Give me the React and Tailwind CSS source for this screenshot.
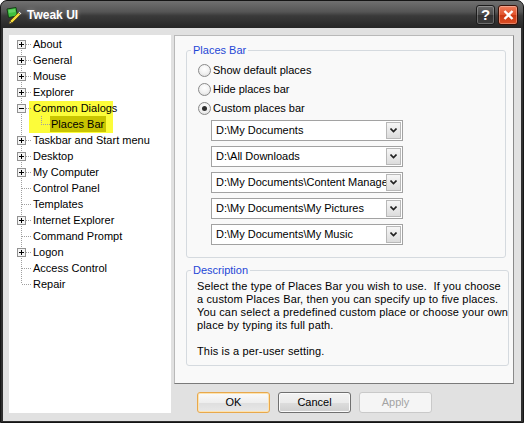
import React from 'react';

const TREE = [
  { label: 'About', box: '+' },
  { label: 'General', box: '+' },
  { label: 'Mouse', box: '+' },
  { label: 'Explorer', box: '+' },
  { label: 'Common Dialogs', box: '-' },
  { label: 'Places Bar', child: true },
  { label: 'Taskbar and Start menu', box: '+' },
  { label: 'Desktop', box: '+' },
  { label: 'My Computer', box: '+' },
  { label: 'Control Panel' },
  { label: 'Templates' },
  { label: 'Internet Explorer', box: '+' },
  { label: 'Command Prompt' },
  { label: 'Logon', box: '+' },
  { label: 'Access Control' },
  { label: 'Repair' }
];

const PLACES = [
  'D:\\My Documents',
  'D:\\All Downloads',
  'D:\\My Documents\\Content Manager',
  'D:\\My Documents\\My Pictures',
  'D:\\My Documents\\My Music'
];

const DOTS = '#a0a0a0';

function Connector({ box, first, last }) {
  return (
    <svg width="16" height="16" className="block shrink-0">
      <line x1="4.5" y1={first ? 8 : 0} x2="4.5" y2={last ? 8 : 16} stroke={DOTS} strokeDasharray="1 1" />
      <line x1={box ? 9 : 5} y1="8.5" x2="15" y2="8.5" stroke={DOTS} strokeDasharray="1 1" />
      {box &&
      <g>
          <rect x="0.5" y="4.5" width="8" height="8" fill="#f4f4f4" stroke="#919191" />
          <line x1="2" y1="8.5" x2="7" y2="8.5" stroke="#000" />
          {box === '+' && <line x1="4.5" y1="6" x2="4.5" y2="11" stroke="#000" />}
        </g>
      }
    </svg>);

}

function ChildConnector() {
  return (
    <>
      <svg width="16" height="16" className="block shrink-0">
        <line x1="4.5" y1="0" x2="4.5" y2="16" stroke={DOTS} strokeDasharray="1 1" />
      </svg>
      <svg width="17" height="16" className="block shrink-0">
        <line x1="8.5" y1="0" x2="8.5" y2="8" stroke={DOTS} strokeDasharray="1 1" />
        <line x1="8" y1="8.5" x2="17" y2="8.5" stroke={DOTS} strokeDasharray="1 1" />
      </svg>
    </>);

}

function Tree() {
  return (
    <div className="relative w-[162px] bg-white pt-px pl-2">
      {/* highlighter mark */}
      <div className="absolute left-[20px] top-[66px] w-[84px] h-[32px] bg-[#fcfc3a]" />
      {TREE.map((item, i) =>
      <div key={item.label} className="relative flex items-center h-4">
          {item.child ?
        <ChildConnector /> :

        <Connector box={item.box} first={i === 0} last={i === TREE.length - 1} />
        }
          {item.child ?
        <span className="bg-[#c9c500] pl-px pr-[2px] leading-4">{item.label}</span> :

        <span className="leading-4 whitespace-nowrap">{item.label}</span>
        }
        </div>
      )}
    </div>);

}

function Radio({ checked, label }) {
  return (
    <div className="flex items-center h-[19px]">
      <span className="flex items-center justify-center w-[13px] h-[13px] rounded-full border border-[#8a8a8a] bg-[radial-gradient(circle_at_50%_35%,#ffffff_0%,#f2f2f2_50%,#d8d8d8_100%)]">
        {checked && <span className="w-[5px] h-[5px] rounded-full bg-[#303030]" />}
      </span>
      <span className="ml-[2px]">{label}</span>
    </div>);

}

function Combo({ value }) {
  return (
    <div className="flex items-center w-[192px] h-[21px] border border-[#a2a2a2] bg-white">
      <span className="flex-1 min-w-0 overflow-hidden whitespace-nowrap pl-[4px]">{value}</span>
      <span className="flex items-center justify-center shrink-0 w-[15px] h-[17px] mr-px border border-[#b8b8b8] bg-[linear-gradient(to_bottom,#f6f6f6,#dcdcdc)]">
        <svg width="7" height="5" viewBox="0 0 7 5">
          <path d="M0.5 0.5 L3.5 3.5 L6.5 0.5" fill="none" stroke="#222" strokeWidth="1.6" />
        </svg>
      </span>
    </div>);

}

function GroupBox({ title, className, children }) {
  return (
    <fieldset className="border border-[#d5dadf] rounded-[3px] w-[320px] ml-[11px]">
      <legend className="ml-[4px] px-[2px] leading-[13px] text-[#1f47d6]">{title}</legend>
      <div className={className}>{children}</div>
    </fieldset>);

}

function Button({ children, variant }) {
  const styles = {
    default:
    'border-[#e8a84c] bg-[linear-gradient(to_bottom,#fbfbfb_0%,#eeeeee_50%,#dedede_51%,#e8e8e8_100%)] text-black shadow-[inset_0_0_0_1px_#fde3b0]',
    normal:
    'border-[#707070] bg-[linear-gradient(to_bottom,#f3f3f3_0%,#ebebeb_50%,#dddddd_51%,#cfcfcf_100%)] text-black shadow-[inset_0_0_0_1px_#fbfbfb]',
    disabled: 'border-[#c9c9c9] bg-[#f5f5f5] text-[#a3a3a3]'
  };
  return (
    <div className={`flex items-center justify-center w-[73px] h-[21px] rounded-[3px] border ${styles[variant]}`}>
      {children}
    </div>);

}

function AppIcon() {
  return (
    <svg width="18" height="18" viewBox="0 0 18 18" className="block">
      <path d="M2 3 L11 1.5 L12.5 10 L3.5 11.5 Z" fill="#3fbf3f" stroke="#143c14" strokeWidth="1" />
      <path d="M3.5 4 L10 3 L10.6 6 L4 7 Z" fill="#7fe07f" opacity="0.6" />
      <path d="M5 15 L13.5 6.5 L15.5 8.5 L7 17 Z" fill="#f4dc3c" stroke="#5a4a10" strokeWidth="0.8" />
      <path d="M5 15 L7 17 L4 17.5 Z" fill="#e9d3a0" stroke="#5a4a10" strokeWidth="0.6" />
      <path d="M13.5 6.5 L14.5 5.5 L16.5 7.5 L15.5 8.5 Z" fill="#e8e8e8" stroke="#555" strokeWidth="0.6" />
    </svg>);

}

export default function App() {
  return (
    <div className="w-[524px] h-[423px] flex flex-col bg-[#2f2f2f] border border-[#151515] rounded-t-[7px] overflow-hidden font-['Liberation_Sans',Arial,sans-serif] text-[11px] text-black">
      {/* Title bar */}
      <div className="flex items-center h-[27px] shrink-0 pl-[4px] pr-[4px] bg-[linear-gradient(to_bottom,#707070_0%,#555555_40%,#3a3a3a_55%,#262626_100%)]">
        <AppIcon />
        <span className="ml-[4px] text-[12px] font-bold text-white [text-shadow:0_0_4px_rgba(255,255,255,0.35)]">
          Tweak UI
        </span>
        <div className="ml-auto flex items-center gap-[3px] mr-[1px]">
          <div className="flex items-center justify-center w-[19px] h-[20px] rounded-[3px] border border-[#1c1c1c] bg-[linear-gradient(to_bottom,#6a6a6a_0%,#4a4a4a_50%,#333333_51%,#3c3c3c_100%)] shadow-[inset_0_0_0_1px_rgba(255,255,255,0.25)] text-white font-bold text-[15px] leading-none">
            ?
          </div>
          <div className="flex items-center justify-center w-[20px] h-[20px] rounded-[3px] border border-[#3a1208] bg-[linear-gradient(to_bottom,#ee7d5c_0%,#e2532c_50%,#cc3a14_51%,#dc4f26_100%)] shadow-[inset_0_0_0_1px_rgba(255,255,255,0.3)]">
            <svg width="11" height="10" viewBox="0 0 11 10">
              <path d="M1.5 1 L9.5 9 M9.5 1 L1.5 9" stroke="#fff" strokeWidth="2.4" />
            </svg>
          </div>
        </div>
      </div>

      {/* Client area */}
      <div className="flex flex-1 mx-[2px] mb-[2px] bg-[#e1e1e1] pt-[7px] pl-[6px] pr-[7px] pb-[8px] gap-[3px]">
        <Tree />

        <div className="flex flex-col flex-1">
          <div className="h-[349px] bg-[#f9f9f9] border border-[#b9b9b9] border-r-[#8a8a8a] border-b-[#7a7a7a] pt-[8px]">
            <GroupBox title="Places Bar" className="pl-[11px] pt-[4px] pb-[12px]">
              <Radio label="Show default places" />
              <Radio label="Hide places bar" />
              <Radio label="Custom places bar" checked />
              <div className="flex flex-col gap-[5px] mt-[2px] ml-[13px]">
                {PLACES.map((p) =>
                <Combo key={p} value={p} />
                )}
              </div>
            </GroupBox>

            <div className="mt-[6px]">
              <GroupBox title="Description" className="pl-[10px] pt-[3px] pb-[7px]">
                <div className="leading-[13px] whitespace-pre tracking-[0.15px]">
                  <div>Select the type of Places Bar you wish to use.  If you choose</div>
                  <div>a custom Places Bar, then you can specify up to five places.</div>
                  <div>You can select a predefined custom place or choose your own</div>
                  <div>place by typing its full path.</div>
                  <div>&nbsp;</div>
                  <div>This is a per-user setting.</div>
                </div>
              </GroupBox>
            </div>
          </div>

          <div className="flex items-center gap-[8px] mt-[8px] pl-[23px]">
            <Button variant="default">OK</Button>
            <Button variant="normal">Cancel</Button>
            <Button variant="disabled">Apply</Button>
          </div>
        </div>
      </div>
    </div>);

}
